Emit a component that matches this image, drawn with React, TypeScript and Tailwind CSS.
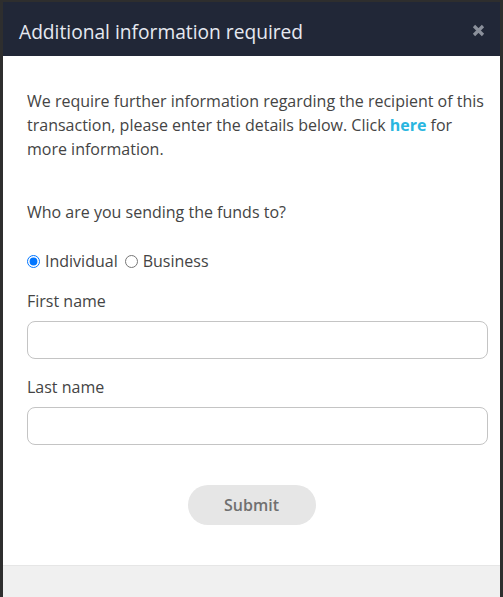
import React from "react";

export default function App() {
  return (
    <div
      className="w-[503px] h-[597px] bg-[#2e2e2e] pt-[2px] pl-[3px] pr-[3px] overflow-hidden"
      style={{ fontFamily: '"Open Sans", "Noto Sans", sans-serif' }}
    >
      <div className="flex flex-col h-full bg-white">
        <div className="h-[54px] bg-[#212737] flex items-center justify-between pl-[16px] pr-[15px] pt-[6px] shrink-0">
          <h1 className="text-[19.2px] text-[#e6e9f1] font-normal leading-none">Additional information required</h1>
          <svg width="13" height="13" viewBox="0 0 13 13" className="-mt-[4px]">
            <path d="M2 2 L11 11 M11 2 L2 11" stroke="#8b909b" strokeWidth="3.2" strokeLinecap="butt" />
          </svg>
        </div>
        <div className="flex-1 pl-[24px] pr-[12px] pt-[33px] text-[#444444] text-[16px] leading-[24px]">
          <p>
            We require further information regarding the recipient of this transaction, please enter the details below. Click{" "}
            <a className="text-[#29b6e0] font-bold">here</a> for more information.
          </p>
          <p className="mt-[39px]">Who are you sending the funds to?</p>
          <div className="mt-[25px] flex items-center h-[24px]">
            <label className="flex items-center">
              <input type="radio" name="t" defaultChecked className="w-[13px] h-[13px] m-0 mr-[5px] accent-[#0075ff]" />
              Individual
            </label>
            <label className="flex items-center ml-[7px]">
              <input type="radio" name="t" className="w-[13px] h-[13px] m-0 mr-[5px]" />
              Business
            </label>
          </div>
          <label className="block mt-[16px]">First name</label>
          <input className="block mt-[8px] w-[461px] h-[38px] border border-[#c4c4c4] rounded-[8px] outline-none" />
          <label className="block mt-[16px]">Last name</label>
          <input className="block mt-[8px] w-[461px] h-[38px] border border-[#c4c4c4] rounded-[8px] outline-none" />
          <div className="flex justify-center mt-[40px] pr-[12px]">
            <button className="w-[128px] h-[40px] rounded-full bg-[#e6e6e6] text-[#707070] font-semibold text-[16px]">Submit</button>
          </div>
        </div>
        <div className="h-[32px] bg-[#f0f0f0] border-t border-[#e6e6e6] shrink-0" />
      </div>
    </div>
  );
}
